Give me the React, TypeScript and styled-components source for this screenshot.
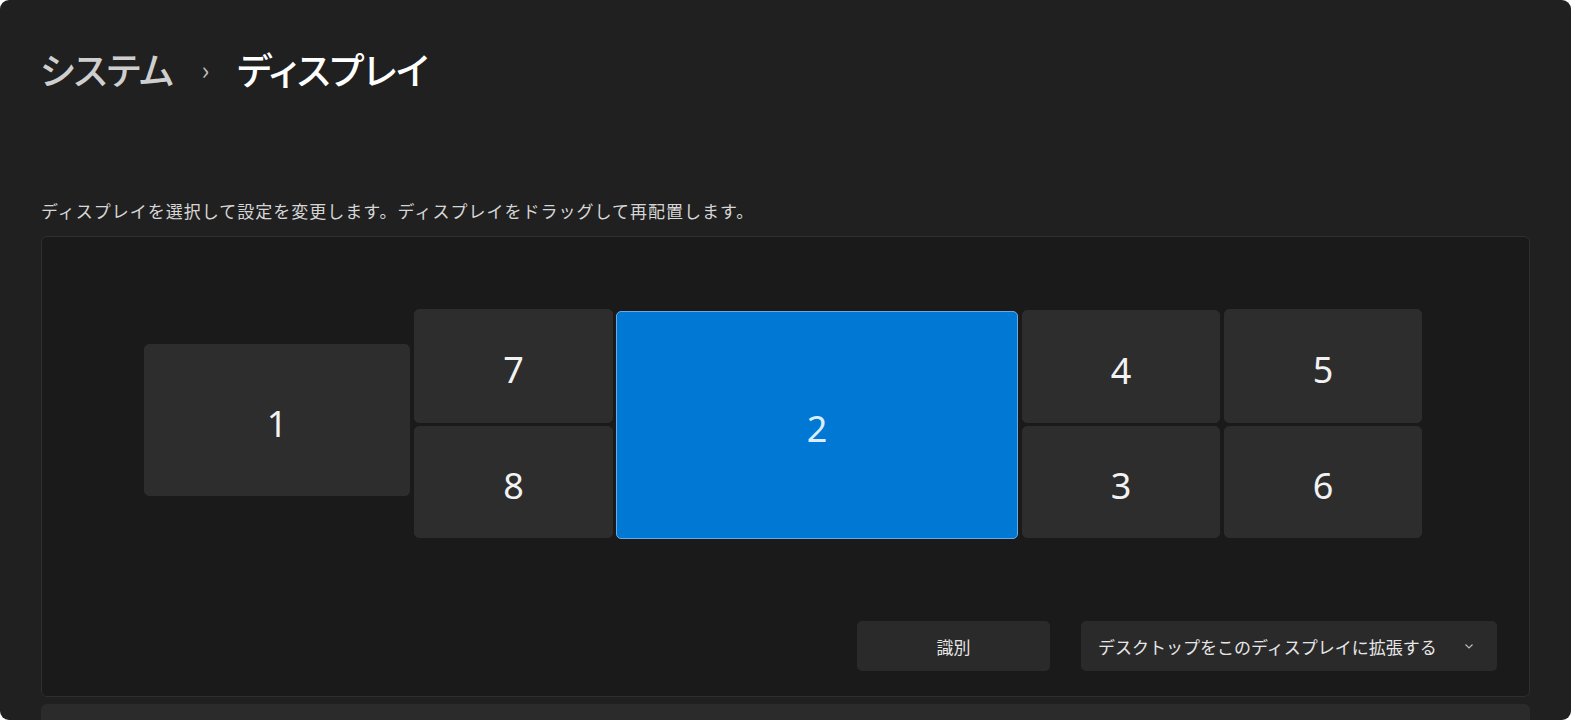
import React from "react";
import styled, { createGlobalStyle } from "styled-components";

const Global = createGlobalStyle`
  html, body { margin: 0; padding: 0; background: #ffffff; }
  body { font-family: "Noto Sans CJK JP", "Noto Sans", sans-serif; }
  * { box-sizing: border-box; }
`;

const Window = styled.div`
  width: 1571px;
  height: 720px;
  background: #202020;
  border-radius: 9px;
  overflow: hidden;
  padding: 0 41px 0 41px;
  font-family: "Noto Sans CJK JP", "Noto Sans", sans-serif;
`;

const Breadcrumb = styled.h1`
  margin: 0;
  padding-top: 39px;
  height: 190px;
  display: flex;
  align-items: flex-start;
  gap: 28px;
  font-size: 37px;
  font-weight: 500;
  line-height: 60px;
  letter-spacing: -0.3px;
  font-feature-settings: "palt";
  margin-left: -1px;
`;

const Crumb = styled.span<{ $current?: boolean }>`
  color: ${(p) => (p.$current ? "#ffffff" : "#cfcfcf")};
`;

const Sep = styled.span`
  color: #bdbdbd;
  font-size: 26px;
  font-weight: 400;
  line-height: 60px;
`;

const Description = styled.p`
  margin: 0;
  height: 46px;
  padding-top: 9px;
  font-size: 17px;
  line-height: 24px;
  color: #d6d6d6;
  letter-spacing: 1px;
`;

const Card = styled.section`
  width: 1489px;
  background: #1a1a1a;
  border: 1px solid #2f2f2f;
  border-radius: 6px;
`;

const Canvas = styled.div`
  position: relative;
  height: 384px;
`;

const Monitor = styled.div<{ $selected?: boolean }>`
  position: absolute;
  display: flex;
  align-items: center;
  justify-content: center;
  padding-top: 7px;
  border-radius: 5px;
  background: ${(p) => (p.$selected ? "#0078d4" : "#2d2d2d")};
  border: 1px solid ${(p) => (p.$selected ? "#6aaae4" : "#2d2d2d")};
  color: ${(p) => (p.$selected ? "#dbeeff" : "#f2f2f2")};
  font-family: "Noto Sans", "Open Sans", sans-serif;
  font-size: 36px;
  font-weight: 400;
`;

const Actions = styled.div`
  display: flex;
  justify-content: flex-end;
  gap: 31px;
  padding: 0 32px 25px 0;
`;

const Button = styled.button`
  width: 193px;
  height: 50px;
  border: none;
  border-radius: 5px;
  background: #2a2a2a;
  color: #e6e6e6;
  font-family: inherit;
  font-size: 17px;
`;

const Select = styled.button`
  width: 416px;
  height: 50px;
  border: none;
  border-radius: 5px;
  background: #2a2a2a;
  color: #e6e6e6;
  font-family: inherit;
  font-size: 17px;
  display: flex;
  align-items: center;
  justify-content: space-between;
  padding: 0 22px 0 17px;
`;

const Chevron = styled.svg`
  width: 12px;
  height: 12px;
`;

const NextCard = styled.div`
  margin-top: 7px;
  width: 1489px;
  height: 40px;
  background: #2b2b2b;
  border-radius: 6px;
`;

const monitors = [
  { n: 1, l: 102, t: 107, w: 266, h: 152 },
  { n: 7, l: 372, t: 72, w: 199, h: 114 },
  { n: 8, l: 372, t: 189, w: 199, h: 112 },
  { n: 2, l: 574, t: 74, w: 402, h: 228, sel: true },
  { n: 4, l: 980, t: 73, w: 198, h: 113 },
  { n: 3, l: 980, t: 189, w: 198, h: 112 },
  { n: 5, l: 1182, t: 72, w: 198, h: 114 },
  { n: 6, l: 1182, t: 189, w: 198, h: 112 },
];

export default function App() {
  return (
    <>
      <Global />
      <Window>
        <Breadcrumb>
          <Crumb>システム</Crumb>
          <Sep>›</Sep>
          <Crumb $current>ディスプレイ</Crumb>
        </Breadcrumb>
        <Description>
          ディスプレイを選択して設定を変更します。ディスプレイをドラッグして再配置します。
        </Description>
        <Card>
          <Canvas>
            {monitors.map((m) => (
              <Monitor
                key={m.n}
                $selected={m.sel}
                style={{ left: m.l, top: m.t, width: m.w, height: m.h }}
              >
                {m.n}
              </Monitor>
            ))}
          </Canvas>
          <Actions>
            <Button>識別</Button>
            <Select>
              <span>デスクトップをこのディスプレイに拡張する</span>
              <Chevron viewBox="0 0 12 12">
                <path d="M2.5 4.5 L6 8 L9.5 4.5" fill="none" stroke="#bdbdbd" strokeWidth="1.1" />
              </Chevron>
            </Select>
          </Actions>
        </Card>
        <NextCard />
      </Window>
    </>
  );
}
